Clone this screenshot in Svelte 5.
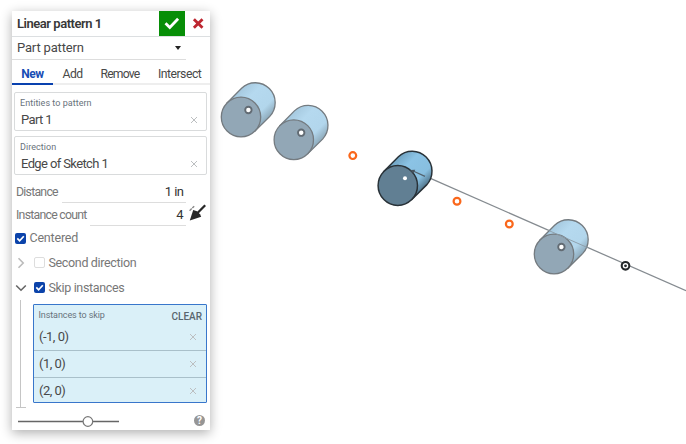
<script>
  const cylinders = [
    { x: 241, y: 117, dim: true },
    { x: 293.8, y: 139.7, dim: true },
    { x: 397.8, y: 185.5, dim: false },
    { x: 554, y: 254, dim: true }
  ];
  const skipped = [[352.8, 155.6], [457, 201.3], [509.3, 224]];
  const entities = [
    { label: 'Entities to pattern', value: 'Part 1' },
    { label: 'Direction', value: 'Edge of Sketch 1' }
  ];
  const instances = ['(-1, 0)', '(1, 0)', '(2, 0)'];
</script>

{#snippet cross()}
  <svg class="cross" width="8" height="8" viewBox="0 0 8 8"><path d="M1 1l6 6M7 1L1 7" /></svg>
{/snippet}

{#snippet check(on)}
  <span class="box" class:on>
    {#if on}<svg width="11" height="11" viewBox="0 0 11 11"><path d="M2.3 5.4l2.3 2.4 4.2-4.6" /></svg>{/if}
  </span>
{/snippet}

<main>
  <svg class="scene" width="686" height="444" viewBox="0 0 686 444">
    <defs>
      <linearGradient id="light" gradientUnits="userSpaceOnUse" x1="-13" y1="-15" x2="15" y2="13">
        <stop offset="0" stop-color="#a6c9df" />
        <stop offset=".3" stop-color="#b5d9ef" />
        <stop offset=".75" stop-color="#b2d6ec" />
        <stop offset="1" stop-color="#8fabbc" />
      </linearGradient>
      <linearGradient id="strong" gradientUnits="userSpaceOnUse" x1="-13" y1="-15" x2="15" y2="13">
        <stop offset="0" stop-color="#71a4c3" />
        <stop offset=".3" stop-color="#8bc3e5" />
        <stop offset=".75" stop-color="#88bfe0" />
        <stop offset="1" stop-color="#53788f" />
      </linearGradient>
    </defs>
    <path class="axis" d="M430.5 178.4L686 290.7" />
    {#each cylinders as c}
      <g transform="translate({c.x} {c.y})" stroke={c.dim ? '#747b80' : '#293238'} stroke-width={c.dim ? 1.3 : 1.5}>
        <path d="M-14 -14L.6 -28.8A19.9 20 0 0 1 28.8 -.6L14 14Z" fill={c.dim ? 'url(#light)' : 'url(#strong)'} />
        <ellipse rx="19.7" ry="19.9" fill={c.dim ? '#92a7b6' : '#617f93'} />
        {#if c.dim}
          <circle cx="7.4" cy="-7" r="3.2" fill="#fff" stroke="#626b73" stroke-width="1.9" />
        {:else}
          <circle cx="7.2" cy="-7.2" r="2" fill="#fff" stroke="none" />
        {/if}
      </g>
    {/each}
    <path class="inner" d="M412 170.5L425 176.4" />
    <path d="M410 170l5.2-.2-1.8 3.7z" fill="#46545f" />
    <path class="faint" d="M548 230.2L588 247.8" />
    {#each skipped as [x, y]}
      <circle cx={x} cy={y} r="3.4" fill="#fff" stroke="#fa671b" stroke-width="2.2" />
    {/each}
    <circle cx="625.5" cy="265.8" r="3.8" fill="#fff" stroke="#24282a" stroke-width="2.1" />
    <circle cx="625.5" cy="265.8" r="1.4" fill="#24282a" />
  </svg>

  <section class="panel">
    <header>
      <span class="title">Linear pattern 1</span>
      <span class="accept"><svg width="26" height="25" viewBox="0 0 26 25"><path d="M6.5 12.2l4.3 4.3 8.3-8.7" /></svg></span>
      <span class="reject"><svg width="25" height="25" viewBox="0 0 25 25"><path d="M8.9 8.2l8.6 8.6M17.5 8.2l-8.6 8.6" /></svg></span>
    </header>
    <div class="type"><span>Part pattern</span><i></i></div>
    <nav><b>New</b><span class="add">Add</span><span class="remove">Remove</span><span class="intersect">Intersect</span></nav>
    {#each entities as e}
      <div class="field">
        <small>{e.label}</small>
        <div class="value"><span>{e.value}</span>{@render cross()}</div>
      </div>
    {/each}
    <div class="quantity distance"><span>Distance</span><div class="input">1 in</div></div>
    <div class="quantity">
      <span>Instance count</span><div class="input">4</div>
      <svg class="arrow" width="18" height="18" viewBox="0 0 18 18">
        <path d="M16.2 1.3L7 10.5" stroke="#282828" stroke-width="2.3" />
        <path d="M.8 16.4L4.2 6 8 7.2 11 10.2 12.2 12.8z" fill="#282828" />
        <path d="M.6 6.7L5.2 2.2" stroke="#888" stroke-width="1.4" stroke-dasharray="3 .8" />
      </svg>
    </div>
    <div class="option centered">{@render check(true)}<span>Centered</span></div>
    <div class="option second">
      <svg class="chevron pale" width="12" height="12" viewBox="0 0 12 12"><path d="M3.5 1.3L8.2 6l-4.7 4.7" /></svg>
      {@render check(false)}<span>Second direction</span>
    </div>
    <div class="option skip">
      <svg class="chevron" width="12" height="12" viewBox="0 0 12 12"><path d="M1.2 3.5L6 8.2l4.8-4.7" /></svg>
      {@render check(true)}<span>Skip instances</span>
    </div>
    <div class="group">
      <div class="bracket"></div>
      <div class="list">
        <div class="listhead"><small>Instances to skip</small><strong>CLEAR</strong></div>
        {#each instances as item}
          <div class="item"><span>{item}</span>{@render cross()}</div>
        {/each}
      </div>
    </div>
    <footer>
      <svg width="102" height="14" viewBox="0 0 102 14">
        <path d="M0 7.5H101" stroke="#666" stroke-width="1.5" />
        <circle cx="69.9" cy="7.5" r="4.8" fill="#fff" stroke="#777" stroke-width="1.2" />
      </svg>
      <span class="help">?</span>
    </footer>
  </section>
</main>

<style>
  main { position: relative; width: 686px; height: 444px; overflow: hidden; background: #fff; font: 13px/16px Roboto, "Liberation Sans", sans-serif; color: #484848; }
  .scene { position: absolute; inset: 0; }
  .axis, .inner, .faint { fill: none; stroke: #858b90; stroke-width: 1.25; }
  .inner { stroke: #54636e; }
  .faint { stroke: #8b9ba6; stroke-width: .9; }
  .panel { position: absolute; left: 12px; top: 11px; width: 197.5px; height: 419px; box-sizing: border-box; background: #fff; box-shadow: 0 3px 11px rgba(0,0,0,.32); white-space: nowrap; }
  svg { display: block; flex: none; fill: none; }
  header { display: flex; height: 25px; border-bottom: 1px solid #dcdfe1; }
  .title { flex: 1; padding-left: 5px; line-height: 26px; font-weight: 600; letter-spacing: -.46px; color: #383838; }
  .accept { width: 26px; background: #078e07; }
  .accept path { stroke: #fff; stroke-width: 2.8; }
  .reject { width: 25px; }
  .reject path { stroke: #bd2630; stroke-width: 2.8; }
  .type { display: flex; justify-content: space-between; align-items: center; width: 174px; height: 23px; padding-left: 5px; box-sizing: border-box; border-bottom: 1px solid #ddd; letter-spacing: -.17px; }
  .type i { width: 0; margin-right: 5.5px; border: 3.2px solid transparent; border-top: 4px solid #222; border-bottom: 0; }
  nav { display: flex; height: 25px; box-sizing: border-box; border-bottom: 2px solid #eee; font-size: 12px; line-height: 28px; }
  nav b { width: 41px; height: 25px; box-sizing: border-box; text-align: center; border-bottom: 2px solid #0941af; color: #174db5; letter-spacing: -.5px; }
  .add { width: 37.5px; padding-left: 9.5px; box-sizing: border-box; letter-spacing: -.9px; letter-spacing: -.5px; }
  .remove { width: 57px; padding-left: 10px; box-sizing: border-box; letter-spacing: -.8px; }
  .intersect { padding-left: 10.5px; letter-spacing: -.5px; }
  .add, .remove, .intersect { font-size: 12.2px; }
  .field { width: 193px; height: 39px; box-sizing: border-box; margin: 7px 0 0 2px; padding: 3px 8px 0 5px; border: 1px solid #d9dbdc; border-radius: 2px; }
  .field + .field { margin-top: 5px; }
  small { font-size: 9px; line-height: 15px; color: #68727b; }
  .field small { display: block; letter-spacing: .04px; }
  .value { display: flex; justify-content: space-between; align-items: center; padding-left: 1px; line-height: 18px; letter-spacing: -.62px; }
  .value span { font-size: 13px; }
  .cross { margin-right: .5px; }
  .cross path { stroke: #bcbfc1; stroke-width: 1; }
  .quantity { display: flex; height: 23px; padding-left: 4px; font-size: 12.3px; line-height: 24px; color: #777; letter-spacing: -.75px; }
  .distance { margin-top: 5px; }
  .quantity .input { width: 96px; margin-left: auto; margin-right: 23.5px; padding-right: 2.5px; box-sizing: border-box; border-bottom: 1px solid #ddd; text-align: right; color: #333; font-size: 13px; letter-spacing: -.5px; }
  .distance .input { width: 124px; }
  .quantity .arrow { margin: 1px 2.5px 0 -20px; }
  .option { display: flex; align-items: center; height: 25px; color: #777; font-size: 12.5px; letter-spacing: -.35px; }
  .box { display: block; width: 11px; height: 11px; margin-right: 3.5px; box-sizing: border-box; border: 1px solid #ddd; border-radius: 2px; }
  .box.on { border: 0; background: #0b43aa; }
  .box path { stroke: #fff; stroke-width: 1.7; }
  .centered { height: 24px; padding-left: 3px; letter-spacing: -.2px; }
  .second, .skip { padding-left: 3px; }
  .chevron { margin-right: 7px; }
  .chevron path { stroke: #666; stroke-width: 1.6; }
  .chevron.pale path { stroke: #bbb; }
  .group { display: flex; height: 108px; }
  .bracket { position: relative; width: 10px; height: 108px; margin: 0 7px 0 4px; box-sizing: border-box; border-bottom: 1px solid #c5c5c5; }
  .bracket::before { content: ""; position: absolute; left: 4px; top: 0; width: 1px; height: 107px; background: #c5c5c5; }
  .list { width: 174px; height: 99px; box-sizing: border-box; margin-top: 4px; border: 1px solid #3876cb; border-radius: 1px; background: #daf0f8; }
  .listhead { display: flex; justify-content: space-between; height: 18px; padding: 3px 4px 0 4.5px; box-sizing: border-box; line-height: 14px; }
  .listhead small { letter-spacing: -.1px; }
  .listhead strong { font-size: 10px; line-height: 18px; color: #59666e; font-weight: 500; }
  .item { display: flex; justify-content: space-between; align-items: center; height: 27px; padding: 0 9px 0 5px; box-sizing: border-box; letter-spacing: -.5px; }
  .item + .item { border-top: 1px solid #a9c0ca; }
  footer { display: flex; justify-content: space-between; height: 25px; align-items: center; padding: 0 4.5px 0 6px; }
  .help { width: 11px; height: 11px; margin-top: -1px; border-radius: 50%; background: #969696; color: #fff; font-size: 10px; line-height: 11.5px; font-weight: bold; text-align: center; }
</style>
